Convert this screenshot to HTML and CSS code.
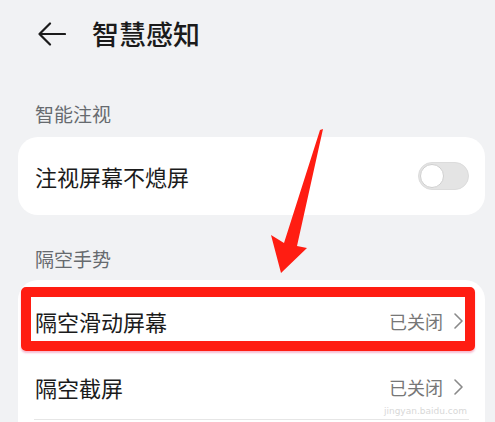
FILE: index.html
```html
<!DOCTYPE html>
<html lang="zh">
<head>
<meta charset="utf-8">
<link rel="stylesheet" href="styles.css">
</head>
<body>
<div class="page">
  <header class="header">
    <svg class="back" width="28" height="24" viewBox="0 0 28 24"><path d="M12 1.5 L1.5 12 L12 22.5 M1.5 12 H27" fill="none" stroke="#1b1b1b" stroke-width="2.2" stroke-linecap="round" stroke-linejoin="round"/></svg>
    <h1 class="title">智慧感知</h1>
  </header>

  <div class="section-label first">智能注视</div>
  <div class="card">
    <div class="row row-toggle">
      <span class="row-title">注视屏幕不熄屏</span>
      <span class="toggle"><span class="knob"></span></span>
    </div>
  </div>

  <div class="section-label second">隔空手势</div>
  <div class="card card-list">
    <div class="row row-link">
      <span class="row-title">隔空滑动屏幕</span>
      <span class="row-value">已关闭</span>
      <svg class="chev" width="9" height="16" viewBox="0 0 9 16"><path d="M1 1 L8 8 L1 15" fill="none" stroke="#8a8a8a" stroke-width="1.6" stroke-linecap="round" stroke-linejoin="round"/></svg>
      <span class="highlight"></span>
    </div>
    <div class="row row-link divided">
      <span class="row-title">隔空截屏</span>
      <span class="row-value">已关闭</span>
      <svg class="chev" width="9" height="16" viewBox="0 0 9 16"><path d="M1 1 L8 8 L1 15" fill="none" stroke="#8a8a8a" stroke-width="1.6" stroke-linecap="round" stroke-linejoin="round"/></svg>
      <span class="watermark">jingyan.baidu.com</span>
    </div>
  </div>

  <svg class="arrow" width="495" height="422" viewBox="0 0 495 422"><polygon points="323,129 297,246 307,248 281,273 271,235 284,243 320,130" fill="#ff1d12"/></svg>
</div>
</body>
</html>
```

FILE: styles.css
```css
html, body {
  margin: 0;
  padding: 0;
  background: #f1f2f4;
}
body {
  font-family: "Noto Sans CJK SC", "Noto Sans", sans-serif;
  width: 495px;
  height: 422px;
  overflow: hidden;
}
.page {
  position: relative;
  padding: 0 10px 0 18px;
  height: 422px;
  box-sizing: border-box;
}
.header {
  display: flex;
  align-items: center;
  height: 66px;
  padding-left: 20px;
}
.back {
  flex: none;
  margin-top: 1px;
}
.title {
  margin: 0 0 0 26px;
  font-size: 27px;
  font-weight: 500;
  color: #1b1b1b;
  line-height: 1;
}
.section-label {
  font-size: 19px;
  color: #666a6e;
  line-height: 20px;
  padding-left: 17px;
}
.section-label.first {
  margin: 38px 0 13px;
}
.section-label.second {
  margin: 34px 0 11px;
}
.card {
  background: #ffffff;
  border-radius: 20px;
}
.row {
  display: flex;
  align-items: center;
  position: relative;
  padding: 0 16px 0 17px;
}
.row-toggle {
  height: 78px;
}
.row-title {
  flex: 1;
  font-size: 22px;
  color: #1b1b1b;
}
.toggle {
  width: 51px;
  height: 28px;
  box-sizing: border-box;
  border-radius: 14px;
  background: #e4e4e4;
  border: 1px solid #dcdcdc;
  display: flex;
  align-items: center;
  padding-left: 1px;
}
.knob {
  width: 24px;
  height: 24px;
  border-radius: 50%;
  background: #fff;
  border: 1px solid #cfcfcf;
  box-sizing: border-box;
}
.card-list {
  padding-top: 8px;
  border-radius: 20px 20px 0 0;
  height: 142px;
  box-sizing: border-box;
}
.row-link {
  height: 66px;
  padding-right: 22px;
}
.row-value {
  font-size: 18px;
  color: #777;
  margin-right: 11px;
}
.divided::after {
  content: "";
  position: absolute;
  left: 16px;
  right: 16px;
  bottom: 0;
  border-bottom: 1px solid #e6e6e6;
}
.highlight {
  position: absolute;
  left: 3px;
  right: 10px;
  top: -1px;
  bottom: 3px;
  border: 10px solid #ff1d12;
  border-radius: 5px;
  box-shadow: 0 2px 2px rgba(230, 60, 120, 0.35);
}
.watermark {
  position: absolute;
  right: 18px;
  bottom: 4px;
  font-family: "DejaVu Sans", sans-serif;
  font-size: 9px;
  color: #d8d8d8;
}
.arrow {
  position: absolute;
  left: 0;
  top: 0;
  pointer-events: none;
}
```
